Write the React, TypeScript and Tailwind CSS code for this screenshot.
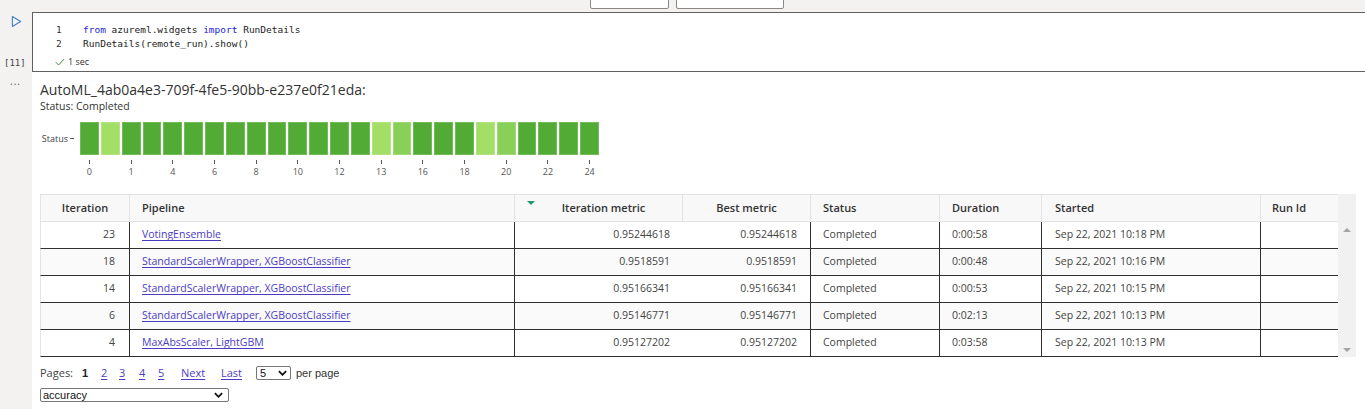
const FONT = "font-['Open_Sans',sans-serif]";

const bars: string[] = [
  'd', 'l', 'd', 'd', 'd', 'd', 'd', 'd', 'd', 'd', 'd', 'd', 'd', 'd',
  'l', 'm', 'd', 'd', 'd', 'l', 'm', 'd', 'd', 'd', 'd',
];
const barLabels = ['0', '1', '4', '6', '8', '10', '12', '13', '16', '18', '20', '22', '24'];

const rows = [
  { it: '23', pipe: 'VotingEnsemble', m: '0.95244618', best: '0.95244618', dur: '0:00:58', start: 'Sep 22, 2021 10:18 PM' },
  { it: '18', pipe: 'StandardScalerWrapper, XGBoostClassifier', m: '0.9518591', best: '0.9518591', dur: '0:00:48', start: 'Sep 22, 2021 10:16 PM' },
  { it: '14', pipe: 'StandardScalerWrapper, XGBoostClassifier', m: '0.95166341', best: '0.95166341', dur: '0:00:53', start: 'Sep 22, 2021 10:15 PM' },
  { it: '6', pipe: 'StandardScalerWrapper, XGBoostClassifier', m: '0.95146771', best: '0.95146771', dur: '0:02:13', start: 'Sep 22, 2021 10:13 PM' },
  { it: '4', pipe: 'MaxAbsScaler, LightGBM', m: '0.95127202', best: '0.95127202', dur: '0:03:58', start: 'Sep 22, 2021 10:13 PM' },
];

function barColor(k: string) {
  if (k === 'l') return 'bg-[#a3de66]';
  if (k === 'm') return 'bg-[#88d058]';
  return 'bg-[#52ab34]';
}

function Chevron({ className }: { className?: string }) {
  return (
    <svg viewBox="0 0 10 6" className={className} fill="none" stroke="currentColor" strokeWidth={2}>
      <path d="M1 1l4 4 4-4" />
    </svg>
  );
}

function CodeCell() {
  return (
    <div className="flex">
      <div className="w-[32px] h-[60px] relative shrink-0">
        <svg viewBox="0 0 12 14" className="absolute left-[11px] top-[3px] w-[11px] h-[13px] text-[#3f7fd0]" fill="none" stroke="currentColor" strokeWidth={1.2}>
          <path d="M1.5 1.5v11l9-5.5z" strokeLinejoin="round" />
        </svg>
        <div className="absolute left-[4px] top-[44px] font-['DejaVu_Sans_Mono',monospace] text-[9px] leading-[14px] text-[#444]">[11]</div>
      </div>
      <div className="flex-1 h-[60px] border-y border-l border-[#616161] bg-white pt-[10px]">
        <div className="font-['DejaVu_Sans_Mono',monospace] text-[9.5px] leading-[14px] text-[#222]">
          <div className="flex">
            <span className="w-[50px] pl-[23px] text-[#333]">1</span>
            <span>
              <span className="text-[#1d1dd8]">from</span> azureml.widgets <span className="text-[#1d1dd8]">import</span> RunDetails
            </span>
          </div>
          <div className="flex">
            <span className="w-[50px] pl-[23px] text-[#333]">2</span>
            <span>RunDetails(remote_run).show()</span>
          </div>
        </div>
        <div className={`flex items-center gap-[3px] pl-[22px] mt-[4px] h-[14px] text-[9px] text-[#333] ${FONT}`}>
          <svg viewBox="0 0 10 8" className="w-[10px] h-[8px] text-[#3d8f3d]" fill="none" stroke="currentColor" strokeWidth={1}>
            <path d="M0.8 4.2l2.8 2.8L9.2 1" />
          </svg>
          <span>1 sec</span>
        </div>
      </div>
    </div>
  );
}

function Chart() {
  return (
    <div className="mt-[9px] flex">
      <div className="w-[40px] h-[33px] flex items-center justify-end pr-[6px] gap-[2px] text-[9px] text-[#444]">
        <span>Status</span>
        <span className="w-[4px] h-px bg-[#555]" />
      </div>
      <div>
        <div className="grid grid-cols-25 gap-[2px] w-[519px] h-[33px]">
          {bars.map((b, i) => (
            <div key={i} className={`${barColor(b)} outline outline-1 outline-[#ffffff30] -outline-offset-1`} />
          ))}
        </div>
        <div className="grid grid-cols-25 gap-[2px] w-[519px] mt-[5px]">
          {bars.map((_, i) => (
            <div key={i} className="flex flex-col items-center">
              {i % 2 === 0 && (
                <>
                  <span className="w-px h-[4px] bg-[#555]" />
                  <span className="text-[9px] leading-[14px] mt-[1px] text-[#555]">{barLabels[i / 2]}</span>
                </>
              )}
            </div>
          ))}
        </div>
      </div>
    </div>
  );
}

function Table() {
  const th = 'h-[28px] border-t border-b border-r border-[#e3e3e3] font-semibold text-[#333] p-0 text-[11px]';
  const td = 'h-[27px] border-b border-[#2f2f2f] p-0';
  const dv = 'border-r border-r-[#2f2f2f]';
  return (
    <div className="flex mt-[15px]">
      <table className="w-[1298px] table-fixed border-separate border-spacing-0 text-[10.5px]">
        <colgroup>
          <col className="w-[90px]" />
          <col className="w-[385px]" />
          <col className="w-[168px]" />
          <col className="w-[128px]" />
          <col className="w-[129px]" />
          <col className="w-[102px]" />
          <col className="w-[219px]" />
          <col className="w-[77px]" />
        </colgroup>
        <thead>
          <tr className="bg-[#f8f8f8]">
            <th className={`${th} border-l text-center`}>Iteration</th>
            <th className={`${th} text-left pl-[12px]`}>Pipeline</th>
            <th className={`${th} text-center relative pl-[10px]`}>
              <span className="absolute left-[12px] top-[6px] w-0 h-0 border-x-[4px] border-x-transparent border-t-[4px] border-t-[#1f9a6c]" />
              Iteration metric
            </th>
            <th className={`${th} text-center`}>Best metric</th>
            <th className={`${th} text-left pl-[12px]`}>Status</th>
            <th className={`${th} text-left pl-[12px]`}>Duration</th>
            <th className={`${th} text-left pl-[13px]`}>Started</th>
            <th className={`${th} text-left pl-[11px] border-r-0`}>Run Id</th>
          </tr>
        </thead>
        <tbody className="text-[#444]">
          {rows.map((r, i) => (
            <tr key={i} className={i % 2 === 1 ? 'bg-[#fafafa]' : 'bg-white'}>
              <td className={`${td} ${dv} border-l border-l-[#e3e3e3] text-right pr-[14px]`}>{r.it}</td>
              <td className={`${td} ${dv} pl-[12px]`}>
                <a className="text-[#4b3cc4] underline underline-offset-2 decoration-1">{r.pipe}</a>
              </td>
              <td className={`${td} text-right pr-[13px]`}>{r.m}</td>
              <td className={`${td} ${dv} text-right pr-[13px]`}>{r.best}</td>
              <td className={`${td} ${dv} pl-[12px]`}>Completed</td>
              <td className={`${td} ${dv} pl-[12px]`}>{r.dur}</td>
              <td className={`${td} ${dv} pl-[13px]`}>{r.start}</td>
              <td className={td}></td>
            </tr>
          ))}
        </tbody>
      </table>
      <div className="w-[18px] h-[163px] bg-[#f1f1f1] flex flex-col items-center justify-between pt-[34px] pb-[5px]">
        <span className="w-0 h-0 border-x-[4px] border-x-transparent border-b-[4px] border-b-[#a3a3a3]" />
        <span className="w-0 h-0 border-x-[4px] border-x-transparent border-t-[4px] border-t-[#a3a3a3]" />
      </div>
    </div>
  );
}

function Pager() {
  const link = 'text-[#4b3cc4] underline underline-offset-2';
  return (
    <div className="mt-[8px] flex items-center h-[16px] text-[11px] text-[#444]">
      <span className="w-[42px]">Pages:</span>
      <span className="w-[19px] font-['Liberation_Sans',sans-serif] font-semibold text-[#222]">1</span>
      <span className={`${link} w-[18px]`}>2</span>
      <span className={`${link} w-[20px]`}>3</span>
      <span className={`${link} w-[19px]`}>4</span>
      <span className={`${link} w-[23px]`}>5</span>
      <span className={`${link} w-[40px]`}>Next</span>
      <span className={`${link} w-[35px]`}>Last</span>
      <div className="w-[35px] h-[14px] border border-[#767676] rounded-[2px] bg-white flex items-center justify-between px-[3px] font-['Liberation_Sans',sans-serif] text-[11px] text-[#111]">
        <span>5</span>
        <Chevron className="w-[9px] h-[6px] text-[#111]" />
      </div>
      <span className="ml-[5px] font-['Liberation_Sans',sans-serif] text-[#333]">per page</span>
    </div>
  );
}

export default function App() {
  return (
    <div className={`w-[1365px] h-[409px] overflow-hidden bg-[#f3f2f1] ${FONT}`}>
      <div className="h-[12px] relative">
        <div className="absolute left-[590px] top-[-4px] w-[79px] h-[13px] bg-white border border-[#8a8886] rounded-[2px]" />
        <div className="absolute left-[676px] top-[-4px] w-[108px] h-[13px] bg-white border border-[#8a8886] rounded-[2px]" />
      </div>
      <CodeCell />
      <div className="flex">
        <div className="w-[32px] shrink-0 relative">
          <div className="absolute left-[10px] top-[2px] text-[10px] tracking-[1px] text-[#555]">...</div>
        </div>
        <div className="flex-1 h-[337px] bg-white pl-[8px] pt-[8px]">
          <div className="text-[14px] leading-[19px] text-[#333]">AutoML_4ab0a4e3-709f-4fe5-90bb-e237e0f21eda:</div>
          <div className="text-[10.5px] leading-[14px] text-[#333]">Status: Completed</div>
          <Chart />
          <Table />
          <Pager />
          <div className="mt-[7px] w-[189px] h-[14px] border border-[#767676] rounded-[2px] flex items-center justify-between pl-[2px] pr-[5px] font-['Liberation_Sans',sans-serif] text-[11px] text-[#111]">
            <span>accuracy</span>
            <Chevron className="w-[9px] h-[6px]" />
          </div>
        </div>
      </div>
    </div>
  );
}
